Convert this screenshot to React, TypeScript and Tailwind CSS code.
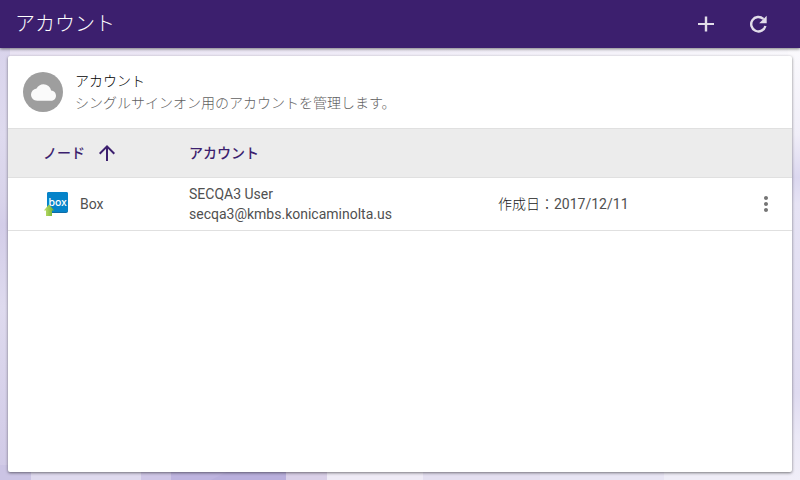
import { MdArrowUpward, MdCloud, MdMoreVert } from 'react-icons/md';

interface Account {
  node: string;
  user: string;
  email: string;
  created: string;
}

const accounts: Account[] = [
  {
    node: 'Box',
    user: 'SECQA3 User',
    email: 'secqa3@kmbs.konicaminolta.us',
    created: '2017/12/11',
  },
];

function Backdrop() {
  return (
    <svg
      className="absolute inset-0 -z-10 h-full w-full"
      viewBox="0 0 800 480"
      preserveAspectRatio="none"
      aria-hidden="true"
    >
      <defs>
        <linearGradient id="left" x1="0" y1="0" x2="0" y2="1">
          <stop offset="0" stopColor="#d9d4ec" />
          <stop offset="0.2" stopColor="#dedaee" />
          <stop offset="0.35" stopColor="#d8d3ea" />
          <stop offset="0.41" stopColor="#d3cde8" />
          <stop offset="0.6" stopColor="#dedaee" />
          <stop offset="1" stopColor="#d0c9e6" />
        </linearGradient>
        <linearGradient id="right" x1="0" y1="0" x2="0" y2="1">
          <stop offset="0" stopColor="#fbfafd" />
          <stop offset="0.2" stopColor="#f0eef8" />
          <stop offset="0.3" stopColor="#dbd7ef" />
          <stop offset="0.36" stopColor="#e6e3f4" />
          <stop offset="0.8" stopColor="#dfdbf0" />
          <stop offset="0.9" stopColor="#ebe8f6" />
          <stop offset="1" stopColor="#f0eef8" />
        </linearGradient>
        <linearGradient id="top" x1="0" y1="0" x2="1" y2="0">
          <stop offset="0" stopColor="#e9e3f3" />
          <stop offset="0.4" stopColor="#efebf7" />
          <stop offset="1" stopColor="#f9f8fc" />
        </linearGradient>
      </defs>
      <rect width="800" height="480" fill="#efedf7" />
      <rect x="10" y="48" width="790" height="20" fill="url(#top)" />
      <rect y="48" width="10" height="432" fill="url(#left)" />
      <rect x="788" y="48" width="12" height="432" fill="url(#right)" />
      <rect y="465" width="31" height="15" fill="#cbc4e4" />
      <rect x="31" y="465" width="110" height="15" fill="#dfdaee" />
      <rect x="141" y="465" width="30" height="15" fill="#cfc6e6" />
      <rect x="171" y="465" width="115" height="15" fill="#b9afdc" />
      <path d="M171 465h70l-30 15h-40z" fill="#beb4df" />
      <rect x="286" y="465" width="41" height="15" fill="#dad0e8" />
      <rect x="327" y="465" width="96" height="15" fill="#efebf6" />
      <rect x="423" y="465" width="117" height="15" fill="#e4dff0" />
      <rect x="540" y="465" width="124" height="15" fill="#e8e5f4" />
    </svg>
  );
}

function AddIcon() {
  return (
    <svg className="h-6 w-6" viewBox="0 0 24 24" fill="currentColor" aria-hidden="true">
      <path d="M20 13.100h-6.800V19.500h-2.400V13.100H4V10.900h6.800V4.500h2.400v6.400H20z" />
    </svg>
  );
}

function RefreshIcon() {
  return (
    <svg className="h-6 w-6" viewBox="0 0 24 24" aria-hidden="true">
      <path
        d="M17.400 7A7.200 7.200 0 1 0 19.400 14"
        fill="none"
        stroke="currentColor"
        strokeWidth="2.400"
      />
      <path d="M20.700 3.800v7.500h-7.500z" fill="currentColor" />
    </svg>
  );
}

function BoxIcon() {
  return (
    <svg className="h-6 w-6" viewBox="0 0 24 24" aria-hidden="true">
      <defs>
        <linearGradient id="arrow" x1="0" y1="0" x2="1" y2="0">
          <stop offset="0" stopColor="#c3e070" />
          <stop offset="1" stopColor="#6fae2c" />
        </linearGradient>
      </defs>
      <rect x="3" y="0" width="21" height="21" rx="2" fill="#0e6ca6" />
      <rect x="3" y="0" width="21" height="20" rx="2" fill="#0583c9" />
      <text
        x="13.7"
        y="14"
        textAnchor="middle"
        fill="#fff"
        fontSize="10.5"
        fontWeight="500"
        fontFamily="Inter, sans-serif"
      >
        box
      </text>
      <path d="M5 12.500l5.200 6H8v5.500H2v-5.500H-.2z" fill="url(#arrow)" />
    </svg>
  );
}

export default function App() {
  return (
    <div className="relative isolate flex min-h-screen flex-col font-['Roboto','Noto_Sans_CJK_JP',sans-serif] text-sm text-[#505050]">
      <Backdrop />

      <header className="flex h-12 items-center justify-between bg-[#3c1f6e] pr-[22px] pl-[15px] text-white/85 shadow-[0_1px_3px_rgba(0,0,0,0.5)]">
        <h1 className="text-xl font-light text-white">アカウント</h1>
        <div className="flex gap-3">
          <button type="button" aria-label="追加" className="flex h-10 w-10 items-center justify-center">
            <AddIcon />
          </button>
          <button type="button" aria-label="更新" className="flex h-10 w-10 items-center justify-center">
            <RefreshIcon />
          </button>
        </div>
      </header>

      <main className="m-2 flex-1 rounded-xs bg-white shadow-[0_1px_3px_rgba(0,0,0,0.5)]">
        <div className="flex h-[72px] items-center gap-3 px-[15px]">
          <div className="flex h-10 w-10 items-center justify-center rounded-full bg-[#9e9e9e] text-[#fafafa]">
            <MdCloud size={25} />
          </div>
          <div className="leading-[22px] font-light">
            <h2 className="text-black">アカウント</h2>
            <p className="text-[#616161]">シングルサインオン用のアカウントを管理します。</p>
          </div>
        </div>

        <table className="w-full table-fixed border-collapse text-left">
          <colgroup>
            <col className="w-[181px]" />
            <col className="w-[309px]" />
            <col />
            <col className="w-[52px]" />
          </colgroup>
          <thead>
            <tr className="h-[49px] border-y border-[#e0e0e0] bg-[#ececec] text-[#3c1f6e]">
              <th className="pl-[35px] font-medium" aria-sort="ascending">
                <button type="button" className="flex items-center gap-[10px]">
                  ノード
                  <MdArrowUpward size={24} />
                </button>
              </th>
              <th className="font-medium">アカウント</th>
              <td></td>
              <td></td>
            </tr>
          </thead>
          <tbody>
            {accounts.map((account) => (
              <tr key={account.email} className="h-[53px] border-b border-[#e0e0e0]">
                <td className="pl-9">
                  <div className="flex items-center gap-3">
                    <BoxIcon />
                    {account.node}
                  </div>
                </td>
                <td className="leading-5">
                  <div>{account.user}</div>
                  <div>{account.email}</div>
                </td>
                <td>
                  <span className="font-light text-[#212121]">作成日：</span>
                  {account.created}
                </td>
                <td>
                  <button
                    type="button"
                    aria-label="メニュー"
                    className="flex h-10 w-[52px] items-center justify-center text-[#757575]"
                  >
                    <MdMoreVert size={24} />
                  </button>
                </td>
              </tr>
            ))}
          </tbody>
        </table>
      </main>
    </div>
  );
}
